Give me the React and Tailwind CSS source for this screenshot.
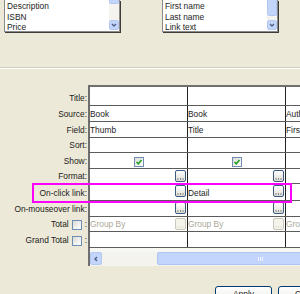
import React from 'react';

const rows = [
  { label: 'Title:', h: 'h-[19px]' },
  { label: 'Source:', h: 'h-[16px]', cells: ['Book', 'Book', 'Author'] },
  { label: 'Field:', h: 'h-[16px]', cells: ['Thumb', 'Title', 'First name'] },
  { label: 'Sort:', h: 'h-[15px]' },
  { label: 'Show:', h: 'h-[16px]', check: true },
  { label: 'Format:', h: 'h-[15px]', dots: true },
  { label: 'On-click link:', h: 'h-[17px]', dots: true, cells: ['', 'Detail', ''] },
  { label: 'On-mouseover link:', h: 'h-[16px]', dots: true },
  { label: 'Total', h: 'h-[15px]', box: true, group: true },
  { label: 'Grand Total', h: 'h-[16px]', box: true },
];

const Chevron = ({ dir = 'down' }) => (
  <svg width="6" height="6" viewBox="0 0 6 6">
    {dir === 'down' ? (
      <polyline points="1,2 3,4 5,2" fill="none" stroke="#4d6185" strokeWidth="1.4" />
    ) : (
      <polyline points="4,1 2,3 4,5" fill="none" stroke="#4d6185" strokeWidth="1.4" />
    )}
  </svg>
);

const ListBox = ({ items, thumb, className }) => (
  <div className={`flex shrink-0 h-[32px] w-[116px] bg-white border-l border-b border-r border-[#8a8a8a] shadow-[1px_1px_0_#3c3c3c] ${className}`}>
    <div className="flex-1 pl-[2px] pt-[1px] leading-[10.5px] overflow-hidden">
      {items.map((item) => (
        <div key={item} className="whitespace-nowrap">{item}</div>
      ))}
    </div>
    <div className="w-[10px] flex flex-col">
      <div className={`${thumb} bg-[#c4d5fc] border-x border-b border-[#b3c7f3] rounded-b-[2px]`} />
      <div className="flex-1 bg-[#f4f3ee]" />
      <div className="h-[10px] mb-[1px] bg-[#c4d5fc] border border-[#b3c7f3] rounded-[2px] flex items-center justify-center">
        <Chevron />
      </div>
    </div>
  </div>
);

const DotsButton = ({ disabled }) => (
  <div
    className={`shrink-0 self-start mt-[1px] mr-[1px] w-[11px] h-[12px] rounded-[2px] border flex items-end justify-center pb-[1px] ${
      disabled ? 'border-[#c9c7ba] bg-[#f5f4ea]' : 'border-[#3a5a86] bg-gradient-to-b from-white to-[#dedcd3]'
    }`}
  >
    <svg width="7" height="2" viewBox="0 0 7 2">
      {[0.5, 3, 5.5].map((x) => (
        <rect key={x} x={x} y="0.5" width="1" height="1" fill={disabled ? '#c9c7ba' : '#333'} />
      ))}
    </svg>
  </div>
);

const CheckBox = ({ checked, className = '' }) => (
  <div className={`shrink-0 w-[10px] h-[10px] border border-[#6f8db5] bg-gradient-to-br from-[#dcdcd5] to-white flex items-center justify-center ${className}`}>
    {checked && (
      <svg width="8" height="8" viewBox="0 0 8 8">
        <polyline points="1.5,4 3.3,5.8 6.5,2" fill="none" stroke="#21a121" strokeWidth="1.6" />
      </svg>
    )}
  </div>
);

const Cell = ({ row, col, last }) => {
  const text = row.cells ? row.cells[col] : '';
  return (
    <div
      className={`flex justify-between overflow-hidden ${
        last ? 'flex-1 min-w-0' : 'shrink-0 w-[98px] border-r border-[#222]'
      }`}
    >
      {row.check && !last ? (
        <CheckBox checked className="self-end mb-[1px] mx-auto" />
      ) : (
        <span className={`self-end pb-[2px] leading-[10px] whitespace-nowrap ${row.group ? 'text-[#aca899]' : ''}`}>
          {row.group ? 'Group By' : text}
        </span>
      )}
      {!last && row.dots && <DotsButton />}
      {!last && row.group && <DotsButton disabled />}
    </div>
  );
};

const App = () => {
  return (
    <div className="relative w-[300px] h-[294px] overflow-hidden bg-[#ece9d8] font-['Liberation_Sans',Arial,sans-serif] text-[8.4px] text-[#1c1c1c]">
      <div className="flex">
        <ListBox className="ml-[4px]" thumb="h-[4px]" items={['Description', 'ISBN', 'Price']} />
        <ListBox className="ml-[42px]" thumb="h-[16px]" items={['First name', 'Last name', 'Link text']} />
      </div>

      <div className="mt-[35px] h-[2px] border-t border-[#d3cfbf] border-b border-b-white" />

      <div className="mt-[16px]">
        <div className="flex h-[2px]">
          <div className="shrink-0 w-[88px]" />
          <div className="flex-1 bg-[#6f6f6f]" />
        </div>
        {rows.map((row) => (
          <div key={row.label} className={`flex ${row.h}`}>
            <div className="shrink-0 w-[88px] flex items-end justify-end pr-[1px] pb-[3px] leading-[10px] whitespace-nowrap">
              {row.box ? (
                <>
                  <span>{row.label}</span>
                  <CheckBox className="ml-[3px] mb-[-1px]" />
                  <span className="ml-[3px]">:</span>
                </>
              ) : (
                row.label
              )}
            </div>
            <div className="flex flex-1 min-w-0 bg-white border-l-2 border-l-[#6f6f6f] border-b border-b-[#5c5c5c]">
              <Cell row={row} col={0} />
              <Cell row={row} col={1} />
              <Cell row={row} col={2} last />
            </div>
          </div>
        ))}
        <div className="flex h-[4px]">
          <div className="shrink-0 w-[88px]" />
          <div className="flex-1 bg-[#f7f7f4] border-l-2 border-[#6f6f6f]" />
        </div>
        <div className="flex h-[14px]">
          <div className="shrink-0 w-[88px]" />
          <div className="flex flex-1 min-w-0 bg-[#f4f3ee] border-l-2 border-[#6f6f6f] overflow-hidden">
            <div className="shrink-0 w-[12px] h-[13px] bg-[#c4d5fc] border border-[#b3c7f3] rounded-[2px] flex items-center justify-center">
              <Chevron dir="left" />
            </div>
            <div className="shrink-0 w-[55px]" />
            <div className="shrink-0 w-[206px] h-[13px] bg-[#c4d5fc] border border-[#aec3f2] rounded-[2px] flex items-center justify-center gap-[1px]">
              <div className="w-[1px] h-[4px] bg-[#eef3ff]" />
              <div className="w-[1px] h-[4px] bg-[#eef3ff]" />
              <div className="w-[1px] h-[4px] bg-[#eef3ff]" />
            </div>
          </div>
        </div>
      </div>

      <div className="mt-[20px] flex">
        <div className="shrink-0 ml-[215px] w-[57px] h-[23px] rounded-[3px] border border-[#003c74] bg-gradient-to-b from-white to-[#e3e2da] text-center pt-[2px] leading-[10px]">
          Apply
        </div>
        <div className="shrink-0 ml-[6px] w-[60px] h-[23px] rounded-[3px] border border-[#003c74] bg-gradient-to-b from-white to-[#e3e2da] text-center pt-[2px] leading-[10px]">
          Cancel
        </div>
      </div>

      <div className="absolute left-[32px] top-[183px] w-[260px] h-[20px] border-2 border-[#ff00ff]" />
    </div>
  );
};

export default App;
